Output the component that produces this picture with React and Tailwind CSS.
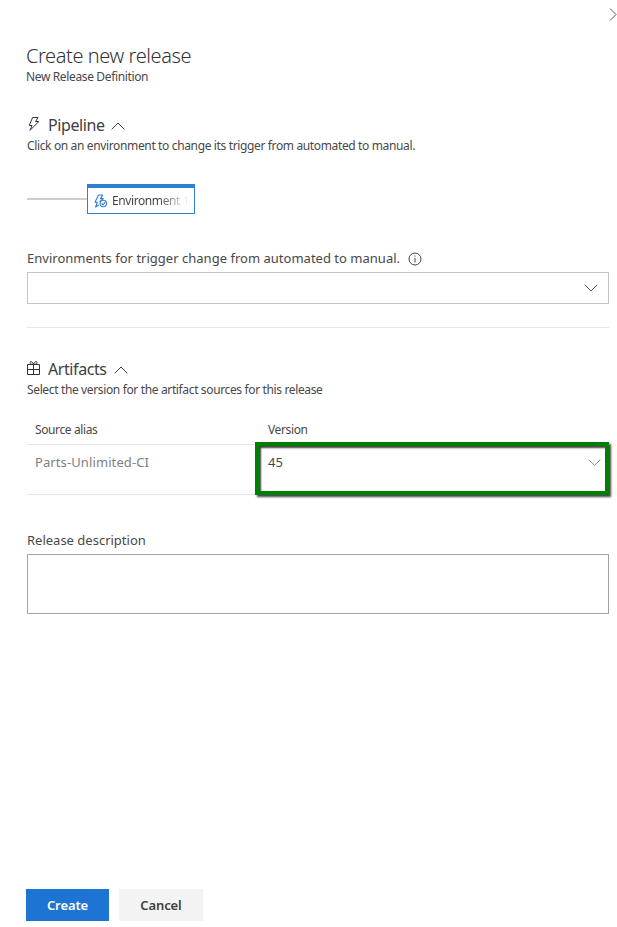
import React from 'react';

function Chevron({ className, d, w, h }) {
  return (
    <svg className={className} width={w} height={h} viewBox={`0 0 ${w} ${h}`} fill="none" stroke="currentColor" strokeWidth="1">
      <path d={d} />
    </svg>
  );
}

function Bolt() {
  return (
    <svg className="mr-[7px] -mt-0.5 shrink-0" width="14" height="16" viewBox="0 0 14 16" fill="none" stroke="#333" strokeWidth="1" strokeLinejoin="round">
      <path d="M5.6 1.5H11L8.6 5.5H11.8L3 14.3L5 9.5H2.2Z" />
    </svg>
  );
}

function Gift() {
  return (
    <svg className="mr-[7px] -mt-0.5 shrink-0" width="14" height="14" viewBox="0 0 14 14" fill="none" stroke="#333" strokeWidth="1">
      <path d="M0.5 3.5H12.5V13.5H0.5ZM0.5 8.5H12.5M6.5 3.5V13.5M6.5 3.5C5.5 0 3 0 3 1.6C3 2.8 4 3.5 6.5 3.5C9 3.5 10 2.8 10 1.6C10 0 7.5 0 6.5 3.5" />
    </svg>
  );
}

function EnvironmentIcon() {
  return (
    <svg className="-mt-0.5 shrink-0" width="14" height="14" viewBox="0 0 14 14" fill="none" stroke="#2f7fd6" strokeWidth="1.1" strokeLinejoin="round">
      <path d="M4.8 11L1.6 13L3.3 8.3H1L4.6 1H8.7L6.5 4.6H9.2L5.6 8.2" />
      <circle cx="9.3" cy="9.5" r="3.2" />
      <path d="M7.6 9.5L8.9 10.8L11.2 8.2" />
    </svg>
  );
}

function Section({ icon, title, description }) {
  return (
    <>
      <div className="flex h-6 items-center text-base tracking-[-0.42px] text-[#404040]">
        {icon}
        <span>{title}</span>
        <Chevron className="ml-[7px] mt-0.5" w={14} h={8} d="M0.7 7.3L7 1L13.3 7.3" />
      </div>
      <p className="h-[18px] text-xs leading-[18px] tracking-[-0.36px]">{description}</p>
    </>
  );
}

export default function App() {
  return (
    <div className="flex h-[927px] w-[617px] flex-col overflow-hidden bg-white pl-[27px] pr-2 font-['Noto_Sans','Open_Sans',sans-serif] text-[#484848] whitespace-nowrap">
      <div className="flex h-11 items-start justify-end pt-2">
        <Chevron className="-mr-2 text-[#555]" w={8} h={13} d="M1 0.5L7 6.5L1 12.5" />
      </div>
      <h1 className="-ml-px h-6 text-xl font-light leading-6 tracking-[-0.42px] text-[#333]">Create new release</h1>
      <p className="-ml-px h-[18px] text-xs leading-[18px] tracking-[-0.36px]">New Release Definition</p>

      <section className="mt-[27px]">
        <Section icon={<Bolt />} title="Pipeline" description="Click on an environment to change its trigger from automated to manual." />
        <div className="mt-[29px] flex h-[30px] items-center">
          <div className="h-0.5 w-[60px] bg-[#cecece]" />
          <div className="flex h-[30px] w-[108px] items-center overflow-hidden border border-t-4 border-[#2f7fd6] pl-1.5 pt-0.5 text-xs">
            <EnvironmentIcon />
            <span className="-mt-px ml-1 bg-linear-to-r from-[#404040] from-60% to-transparent bg-clip-text tracking-[-0.4px] text-transparent">Environment 1</span>
          </div>
        </div>
        <div className="mt-[35px] flex h-5 items-center text-[13px] tracking-[0.015px]">
          <span>Environments for trigger change from automated to manual.</span>
          <svg className="ml-2" width="14" height="14" viewBox="0 0 14 14" fill="none" stroke="#444">
            <circle cx="7" cy="7" r="6" />
            <path d="M7 6V10.5M7 3.5V4.7" />
          </svg>
        </div>
        <div className="mt-[3px] flex h-8 items-center justify-end border border-[#c4c4c4] pr-[10px] text-[#555]">
          <Chevron w={14} h={8} d="M0.7 0.7L7 7L13.3 0.7" />
        </div>
      </section>

      <section className="mt-[23px] border-t border-[#e6e6e6] pt-[29px]">
        <Section icon={<Gift />} title="Artifacts" description="Select the version for the artifact sources for this release" />
        <div className="mt-[22px] grid h-[23px] grid-cols-[233px_1fr] pl-2 text-xs leading-[18px] tracking-[-0.38px]">
          <span>Source alias</span>
          <span>Version</span>
        </div>
        <div className="relative flex h-[51px] border-y border-[#e6e6e6] pl-2 pt-[7px] text-[13px] leading-5">
          <span className="tracking-[0.1px] text-[#808080]">Parts-Unlimited-CI</span>
          <div className="absolute -top-[3px] left-[228px] flex h-[53px] w-[354px] justify-between border-4 border-[#008000] pl-[9px] pr-1 pt-[6px] shadow-[2px_2px_2px_rgba(0,0,0,0.75),inset_2px_2px_2px_rgba(0,0,0,0.75)]">
            <span>45</span>
            <Chevron className="mt-[7px] text-[#888]" w={13} h={7} d="M0.7 0.7L6.5 6.3L12.3 0.7" />
          </div>
        </div>
      </section>

      <label className="mt-[35px] h-5 text-[13px] leading-5">Release description</label>
      <div className="mt-1 h-[60px] shrink-0 border border-[#a3a3a3]" />

      <div className="-ml-px mt-auto mb-1.5 flex gap-2.5 text-[13px] font-semibold tracking-[-0.1px]">
        <button className="h-8 w-[83px] bg-[#1e74d3] pt-px text-white">Create</button>
        <button className="h-8 w-[84px] bg-[#f3f3f3] pt-px text-[#404040]">Cancel</button>
      </div>
    </div>
  );
}
